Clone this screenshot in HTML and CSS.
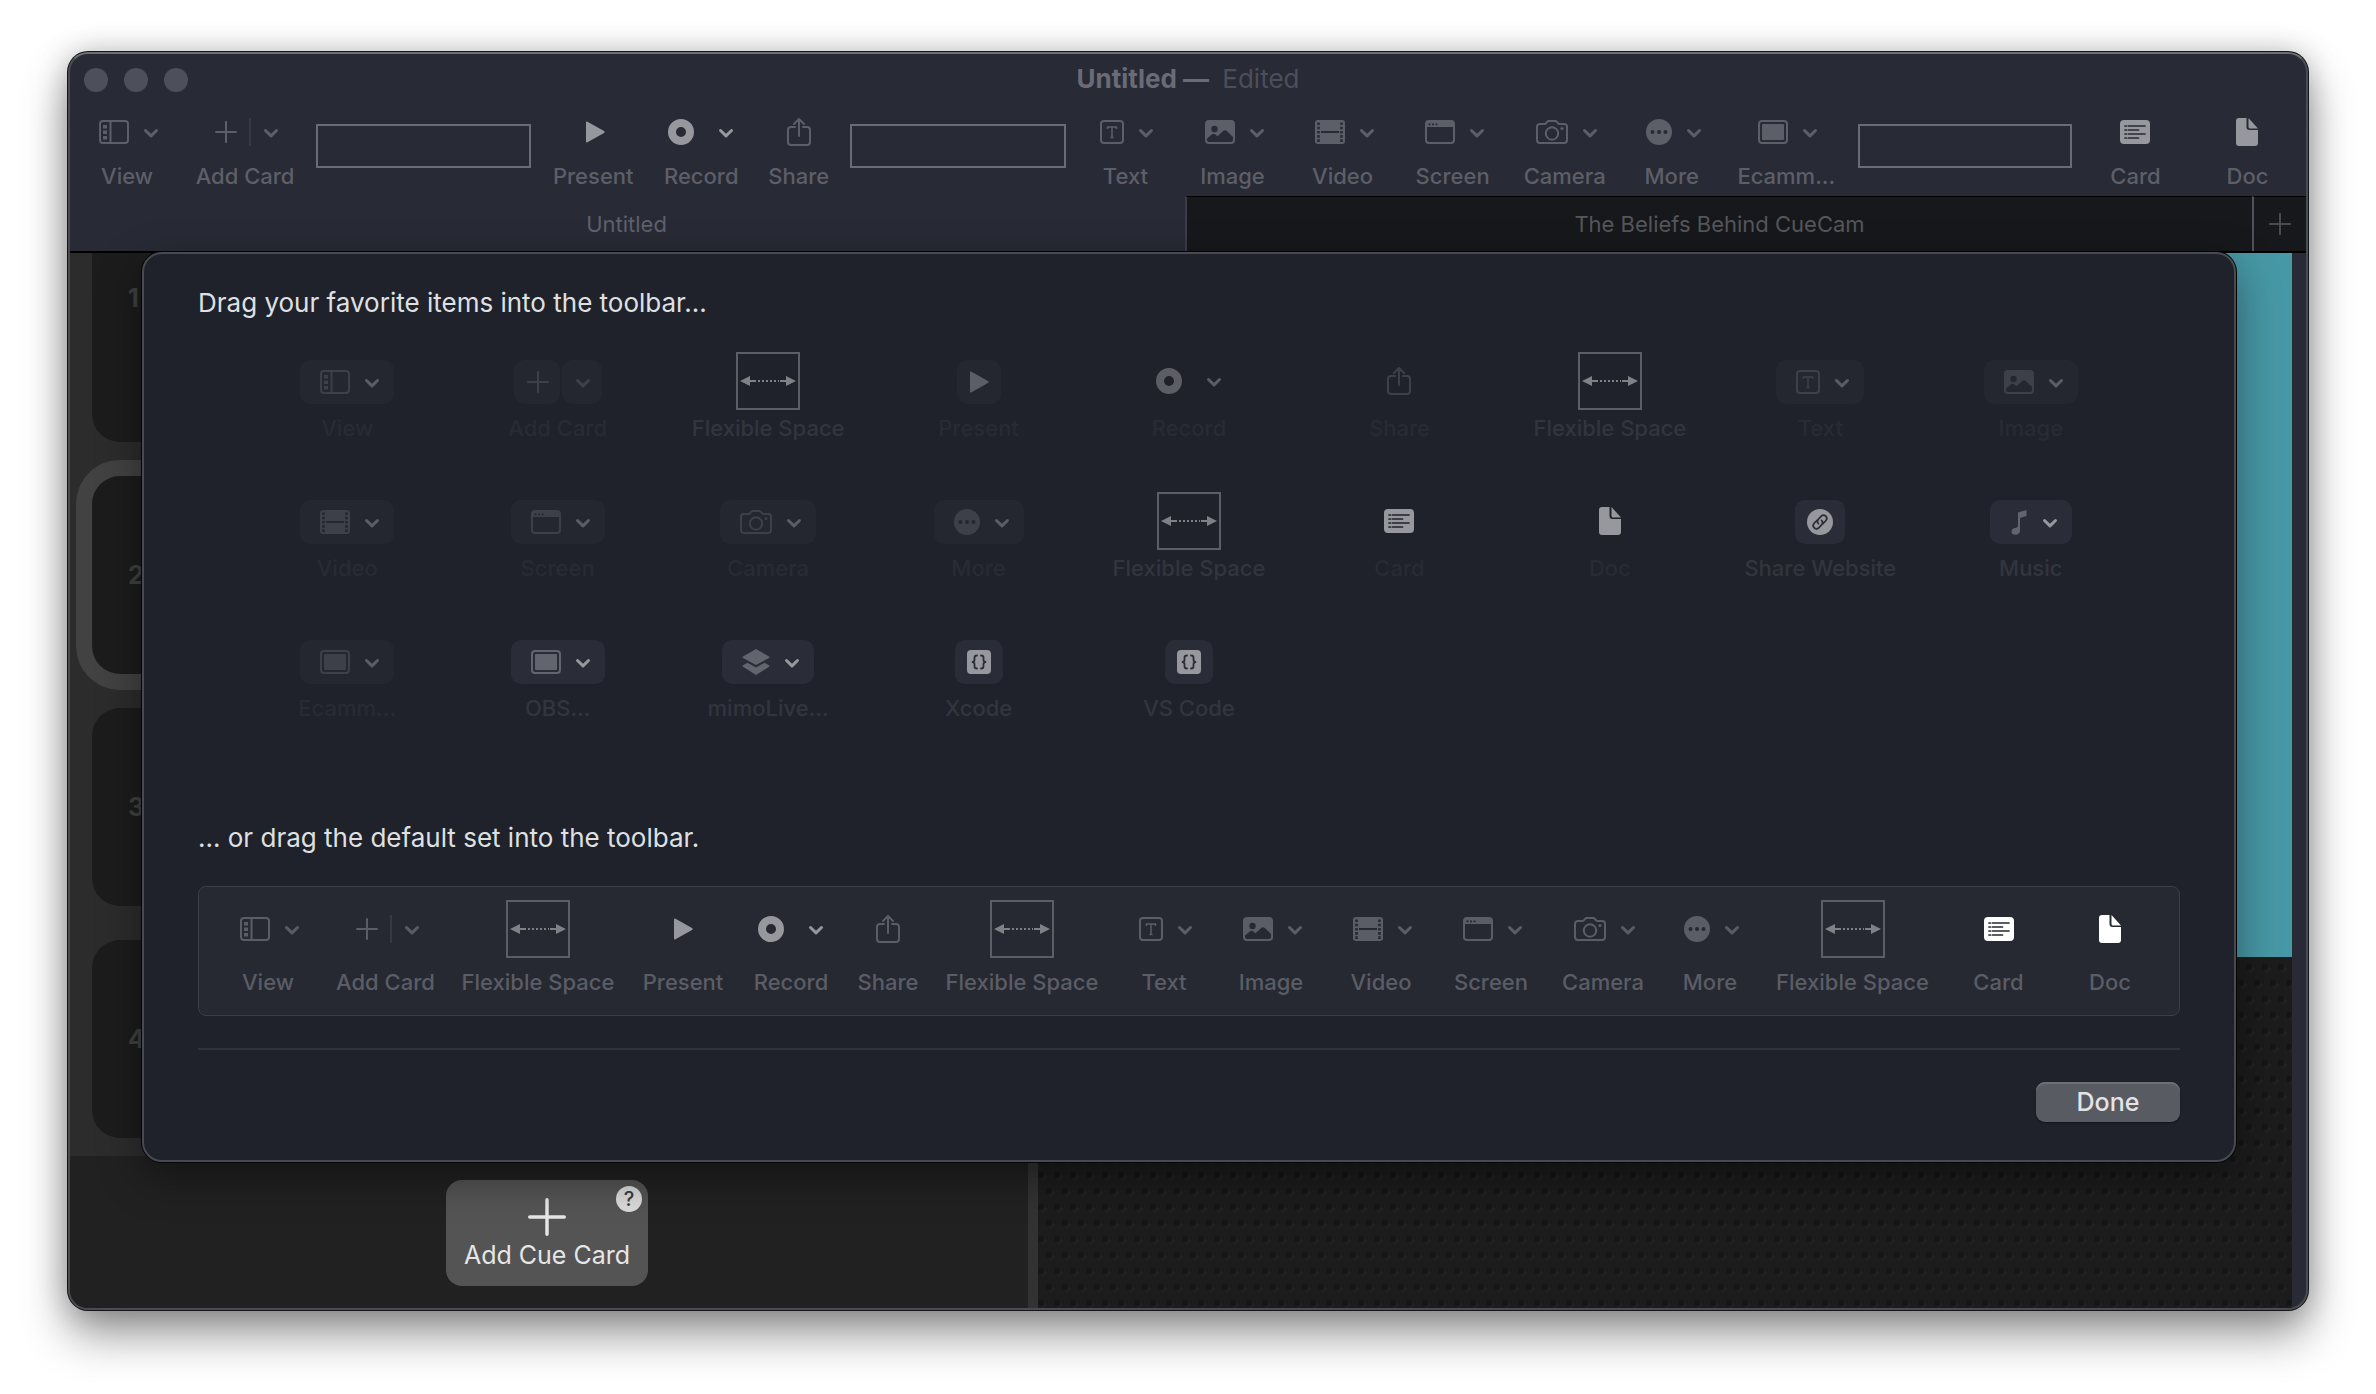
FILE: index.html
```html
<!DOCTYPE html>
<html lang="en">
<head>
<meta charset="utf-8">
<title>Untitled — Edited</title>
<link rel="stylesheet" href="styles.css">
</head>
<body>
<svg class="sprite" aria-hidden="true">
  <symbol id="view" viewBox="0 0 30 24"><rect x="1" y="1" width="28" height="22" rx="3" fill="none" stroke="currentColor" stroke-width="2"/><path d="M11.500 1v22" stroke="currentColor" stroke-width="2"/><path d="M4 5h4v3.500H4zM4 10.500h4V14H4zM4 16h4v3.500H4z" fill="currentColor"/></symbol>
  <symbol id="chev" viewBox="0 0 16 10"><path d="M2.500 2.500 8 7.800l5.500-5.300" fill="none" stroke="currentColor" stroke-width="3" stroke-linecap="round" stroke-linejoin="round"/></symbol>
  <symbol id="plus" viewBox="0 0 22 22"><path d="M11 1v20M1 11h20" stroke="currentColor" stroke-width="2" stroke-linecap="round"/></symbol>
  <symbol id="play" viewBox="0 0 20 22"><path d="M1 1.500Q1 0 2.500.700L19 10q1.300 1 0 2L2.500 21.300Q1 22 1 20.500z" fill="currentColor"/></symbol>
  <symbol id="record" viewBox="0 0 26 26"><circle cx="13" cy="13" r="9" fill="none" stroke="currentColor" stroke-width="8"/></symbol>
  <symbol id="share" viewBox="0 0 24 30"><path d="M8 10H4q-3 0-3 3v12q0 3 3 3h16q3 0 3-3V13q0-3-3-3h-4M12 19V2M7 7l5-5 5 5" fill="none" stroke="currentColor" stroke-width="2" stroke-linecap="round" stroke-linejoin="round"/></symbol>
  <symbol id="text" viewBox="0 0 24 24"><rect x="1" y="1" width="22" height="22" rx="3" fill="none" stroke="currentColor" stroke-width="2"/><path d="M7.500 9V7h9v2M12 7v10.500M10.500 17.500h3" fill="none" stroke="currentColor" stroke-width="1.500"/></symbol>
  <symbol id="image" viewBox="0 0 30 24"><rect width="30" height="24" rx="4" fill="currentColor"/><circle cx="9.500" cy="9" r="3.200" fill="var(--bg)"/><path d="M2 20v-1.500l5.500-4.500q1.200-.800 2.500.200l2.500 2 6-5.500q1.500-1 3 0L28 17v3q0 2-2 2H4q-2 0-2-2z" fill="var(--bg)"/></symbol>
  <symbol id="video" viewBox="0 0 30 24"><rect width="30" height="24" rx="3" fill="currentColor"/><path d="M6 12h18" stroke="var(--bg)" stroke-width="2"/><path d="M3.500 2.500v20M26.500 2.500v20" stroke="var(--bg)" stroke-width="2.600" stroke-dasharray="2.600 1.600"/></symbol>
  <symbol id="screen" viewBox="0 0 30 24"><rect x="1" y="1" width="28" height="22" rx="3" fill="none" stroke="currentColor" stroke-width="2"/><path d="M1 2h28v5H1z" fill="currentColor"/><path d="M3.500 3.500h2v1.800h-2zM7 3.500h2v1.800H7zM10.500 3.500h2v1.800h-2z" fill="var(--bg)"/></symbol>
  <symbol id="camera" viewBox="0 0 32 24"><path d="M4 4h4.500q1 0 1.600-.800l1-1.300q.600-.900 1.700-.900h6.400q1.100 0 1.700.900l1 1.300q.600.800 1.600.800H28q3 0 3 3v13q0 3-3 3H4q-3 0-3-3V7q0-3 3-3z" fill="none" stroke="currentColor" stroke-width="2"/><circle cx="16" cy="13.500" r="6.200" fill="none" stroke="currentColor" stroke-width="2"/><circle cx="26" cy="8.500" r="1.600" fill="currentColor"/></symbol>
  <symbol id="more" viewBox="0 0 26 26"><circle cx="13" cy="13" r="13" fill="currentColor"/><path d="M6.500 13h.01M13 13h.01M19.500 13h.01" stroke="var(--bg)" stroke-width="4" stroke-linecap="round"/></symbol>
  <symbol id="frame" viewBox="0 0 30 24"><rect x="1" y="1" width="28" height="22" rx="3" fill="none" stroke="currentColor" stroke-width="2"/><rect x="4" y="4" width="22" height="16" rx="1" fill="currentColor"/></symbol>
  <symbol id="card" viewBox="0 0 30 24"><rect width="30" height="24" rx="4" fill="currentColor"/><path d="M8.500 6H25M8.500 10h10M8.500 14H25M8.500 18h10M5 6h1.500M5 10h1.500M5 14h1.500M5 18h1.500" stroke="var(--bg)" stroke-width="1.700" stroke-linecap="round"/></symbol>
  <symbol id="doc" viewBox="0 0 22 28"><path d="M3 0h7.500v9q0 3 3 3H22v13q0 3-3 3H3q-3 0-3-3V3q0-3 3-3z" fill="currentColor"/><path d="M12.500 0 22 10.500h-8q-1.500 0-1.500-1.500z" fill="currentColor"/></symbol>
  <symbol id="link" viewBox="0 0 26 26"><circle cx="13" cy="13" r="13" fill="currentColor"/><g transform="rotate(-45 13 13)" fill="none" stroke="var(--bg)" stroke-width="1.700" stroke-linecap="round"><path d="M12 9.800H8a3.200 3.200 0 0 0 0 6.400h4a3.200 3.200 0 0 0 3.200-3.200"/><path d="M14 16.200h4a3.200 3.200 0 0 0 0-6.400h-4a3.200 3.200 0 0 0-3.200 3.200"/></g></symbol>
  <symbol id="music" viewBox="0 0 18 26"><path d="M8 3.500 16.500 1v6L10 9v12.500q0 3.500-4 4.200-4.500.300-4.500-3 0-3 3.500-3.700 3-.300 3-2z" fill="currentColor"/></symbol>
  <symbol id="layers" viewBox="0 0 28 28"><path d="M14 1 27 8.500q1 .700 0 1.400L14 17 1 9.900q-1-.700 0-1.400zM5.500 14.800 14 19.400l8.500-4.600L27 17.300q1 .700 0 1.400L14 27 1 18.700q-1-.700 0-1.400z" fill="currentColor"/></symbol>
  <symbol id="braces" viewBox="0 0 24 24"><rect width="24" height="24" rx="4" fill="currentColor"/><path d="M10 5.500q-2.500 0-2.500 2v2.300q0 2-2 2.200 2 .200 2 2.200v2.300q0 2 2.500 2M14 5.500q2.500 0 2.500 2v2.300q0 2 2 2.200-2 .200-2 2.200v2.300q0 2-2.500 2" fill="none" stroke="var(--bg)" stroke-width="1.800" stroke-linecap="round" stroke-linejoin="round"/></symbol>
  <symbol id="stretch" viewBox="0 0 56 12"><path d="M0 6 10 1v10zM56 6 46 1v10z" fill="currentColor"/><path d="M9 6h7M40 6h7" stroke="currentColor" stroke-width="2"/><path d="M18 6h21" stroke="currentColor" stroke-width="2" stroke-dasharray="2 2"/></symbol>
</svg>

<main class="window">
  <header class="chrome">
    <div class="titlebar">
      <div class="lights"><button aria-label="Close"></button><button aria-label="Minimize"></button><button aria-label="Zoom"></button></div>
      <h1 class="title"><b>Untitled —</b> <span>Edited</span></h1>
    </div>
    <div class="toolbar">
      <button class="item menu"><span class="icons"><svg class="w30"><use href="#view"/></svg><svg class="chev"><use href="#chev"/></svg></span><span class="label">View</span></button>
      <button class="item menu"><span class="icons split"><svg class="w22"><use href="#plus"/></svg><i></i><svg class="chev"><use href="#chev"/></svg></span><span class="label">Add Card</span></button>
      <div class="space"></div>
      <button class="item lit menu"><span class="icons"><svg class="w20"><use href="#play"/></svg></span><span class="label">Present</span></button>
      <button class="item lit"><span class="icons wide"><svg class="w26"><use href="#record"/></svg><svg class="chev"><use href="#chev"/></svg></span><span class="label">Record</span></button>
      <button class="item"><span class="icons"><svg class="w24 tall"><use href="#share"/></svg></span><span class="label">Share</span></button>
      <div class="space"></div>
      <button class="item menu"><span class="icons"><svg class="w24"><use href="#text"/></svg><svg class="chev"><use href="#chev"/></svg></span><span class="label">Text</span></button>
      <button class="item menu"><span class="icons"><svg class="w30"><use href="#image"/></svg><svg class="chev"><use href="#chev"/></svg></span><span class="label">Image</span></button>
      <button class="item menu"><span class="icons"><svg class="w30"><use href="#video"/></svg><svg class="chev"><use href="#chev"/></svg></span><span class="label">Video</span></button>
      <button class="item menu"><span class="icons"><svg class="w30"><use href="#screen"/></svg><svg class="chev"><use href="#chev"/></svg></span><span class="label">Screen</span></button>
      <button class="item menu"><span class="icons"><svg class="w32"><use href="#camera"/></svg><svg class="chev"><use href="#chev"/></svg></span><span class="label">Camera</span></button>
      <button class="item menu"><span class="icons"><svg class="w26"><use href="#more"/></svg><svg class="chev"><use href="#chev"/></svg></span><span class="label">More</span></button>
      <button class="item menu"><span class="icons"><svg class="w30"><use href="#frame"/></svg><svg class="chev"><use href="#chev"/></svg></span><span class="label">Ecamm...</span></button>
      <div class="space"></div>
      <button class="item lit"><span class="icons"><svg class="w30"><use href="#card"/></svg></span><span class="label">Card</span></button>
      <button class="item lit"><span class="icons"><svg class="w22 tall"><use href="#doc"/></svg></span><span class="label">Doc</span></button>
    </div>
    <nav class="tabs">
      <button class="tab current">Untitled</button>
      <button class="tab">The Beliefs Behind CueCam</button>
      <button class="tab add" aria-label="New tab"><svg class="w22"><use href="#plus"/></svg></button>
    </nav>
  </header>

  <div class="content">
    <section class="cues">
      <ol class="cards">
        <li class="first">1</li>
        <li class="selected">2</li>
        <li>3</li>
        <li>4</li>
      </ol>
      <div class="footer">
        <button class="add-cue"><svg><use href="#plus"/></svg><span>Add Cue Card</span><em>?</em></button>
      </div>
    </section>
    <div class="splitter"></div>
    <section class="stage"><div class="video"></div></section>

    <section class="sheet" role="dialog" aria-label="Customize toolbar">
      <h2>Drag your favorite items into the toolbar...</h2>
      <div class="palette">
        <button class="item used"><span class="icons pill"><svg class="w30"><use href="#view"/></svg><svg class="chev"><use href="#chev"/></svg></span><span class="label">View</span></button>
        <button class="item used"><span class="icons pair"><span class="pill"><svg class="w22"><use href="#plus"/></svg></span><span class="pill"><svg class="chev"><use href="#chev"/></svg></span></span><span class="label">Add Card</span></button>
        <button class="item"><span class="icons"><span class="flexbox"><svg><use href="#stretch"/></svg></span></span><span class="label">Flexible Space</span></button>
        <button class="item used bright"><span class="icons pill snug"><svg class="w20"><use href="#play"/></svg></span><span class="label">Present</span></button>
        <button class="item used bright"><span class="icons wide"><svg class="w26"><use href="#record"/></svg><svg class="chev"><use href="#chev"/></svg></span><span class="label">Record</span></button>
        <button class="item used"><span class="icons"><svg class="w24 tall"><use href="#share"/></svg></span><span class="label">Share</span></button>
        <button class="item"><span class="icons"><span class="flexbox"><svg><use href="#stretch"/></svg></span></span><span class="label">Flexible Space</span></button>
        <button class="item used"><span class="icons pill"><svg class="w24"><use href="#text"/></svg><svg class="chev"><use href="#chev"/></svg></span><span class="label">Text</span></button>
        <button class="item used"><span class="icons pill"><svg class="w30"><use href="#image"/></svg><svg class="chev"><use href="#chev"/></svg></span><span class="label">Image</span></button>

        <button class="item used"><span class="icons pill"><svg class="w30"><use href="#video"/></svg><svg class="chev"><use href="#chev"/></svg></span><span class="label">Video</span></button>
        <button class="item used"><span class="icons pill"><svg class="w30"><use href="#screen"/></svg><svg class="chev"><use href="#chev"/></svg></span><span class="label">Screen</span></button>
        <button class="item used"><span class="icons pill"><svg class="w32"><use href="#camera"/></svg><svg class="chev"><use href="#chev"/></svg></span><span class="label">Camera</span></button>
        <button class="item used"><span class="icons pill"><svg class="w26"><use href="#more"/></svg><svg class="chev"><use href="#chev"/></svg></span><span class="label">More</span></button>
        <button class="item"><span class="icons"><span class="flexbox"><svg><use href="#stretch"/></svg></span></span><span class="label">Flexible Space</span></button>
        <button class="item used solid"><span class="icons"><svg class="w30"><use href="#card"/></svg></span><span class="label">Card</span></button>
        <button class="item used solid"><span class="icons"><svg class="w22 tall"><use href="#doc"/></svg></span><span class="label">Doc</span></button>
        <button class="item solid"><span class="icons pill snug"><svg class="w26"><use href="#link"/></svg></span><span class="label">Share Website</span></button>
        <button class="item"><span class="icons pill"><svg class="w18"><use href="#music"/></svg><svg class="chev"><use href="#chev"/></svg></span><span class="label">Music</span></button>

        <button class="item used"><span class="icons pill"><svg class="w30"><use href="#frame"/></svg><svg class="chev"><use href="#chev"/></svg></span><span class="label">Ecamm...</span></button>
        <button class="item"><span class="icons pill"><svg class="w30"><use href="#frame"/></svg><svg class="chev"><use href="#chev"/></svg></span><span class="label">OBS...</span></button>
        <button class="item"><span class="icons pill"><svg class="w28"><use href="#layers"/></svg><svg class="chev"><use href="#chev"/></svg></span><span class="label">mimoLive...</span></button>
        <button class="item solid"><span class="icons pill snug"><svg class="w24"><use href="#braces"/></svg></span><span class="label">Xcode</span></button>
        <button class="item solid"><span class="icons pill snug"><svg class="w24"><use href="#braces"/></svg></span><span class="label">VS Code</span></button>
      </div>

      <h2 class="second">... or drag the default set into the toolbar.</h2>
      <div class="defaults">
        <div class="item menu"><span class="icons"><svg class="w30"><use href="#view"/></svg><svg class="chev"><use href="#chev"/></svg></span><span class="label">View</span></div>
        <div class="item menu"><span class="icons split"><svg class="w22"><use href="#plus"/></svg><i></i><svg class="chev"><use href="#chev"/></svg></span><span class="label">Add Card</span></div>
        <div class="item"><span class="icons"><span class="flexbox"><svg><use href="#stretch"/></svg></span></span><span class="label">Flexible Space</span></div>
        <div class="item lit"><span class="icons"><svg class="w20"><use href="#play"/></svg></span><span class="label">Present</span></div>
        <div class="item lit"><span class="icons wide"><svg class="w26"><use href="#record"/></svg><svg class="chev"><use href="#chev"/></svg></span><span class="label">Record</span></div>
        <div class="item"><span class="icons"><svg class="w24 tall"><use href="#share"/></svg></span><span class="label">Share</span></div>
        <div class="item"><span class="icons"><span class="flexbox"><svg><use href="#stretch"/></svg></span></span><span class="label">Flexible Space</span></div>
        <div class="item menu"><span class="icons"><svg class="w24"><use href="#text"/></svg><svg class="chev"><use href="#chev"/></svg></span><span class="label">Text</span></div>
        <div class="item menu"><span class="icons"><svg class="w30"><use href="#image"/></svg><svg class="chev"><use href="#chev"/></svg></span><span class="label">Image</span></div>
        <div class="item menu"><span class="icons"><svg class="w30"><use href="#video"/></svg><svg class="chev"><use href="#chev"/></svg></span><span class="label">Video</span></div>
        <div class="item menu"><span class="icons"><svg class="w30"><use href="#screen"/></svg><svg class="chev"><use href="#chev"/></svg></span><span class="label">Screen</span></div>
        <div class="item menu"><span class="icons"><svg class="w32"><use href="#camera"/></svg><svg class="chev"><use href="#chev"/></svg></span><span class="label">Camera</span></div>
        <div class="item menu"><span class="icons"><svg class="w26"><use href="#more"/></svg><svg class="chev"><use href="#chev"/></svg></span><span class="label">More</span></div>
        <div class="item"><span class="icons"><span class="flexbox"><svg><use href="#stretch"/></svg></span></span><span class="label">Flexible Space</span></div>
        <div class="item white"><span class="icons"><svg class="w30"><use href="#card"/></svg></span><span class="label">Card</span></div>
        <div class="item white"><span class="icons"><svg class="w22 tall"><use href="#doc"/></svg></span><span class="label">Doc</span></div>
      </div>
      <div class="actions"><button class="done">Done</button></div>
    </section>
  </div>
</main>
</body>
</html>
```
FILE: styles.css
```css
* { box-sizing: border-box; }

body {
  margin: 0;
  min-height: 100vh;
  padding: 52px 68px 84px;
  display: flex;
  background: #fff;
  font-family: Inter, "Liberation Sans", sans-serif;
  font-size: 25px;
}

button {
  margin: 0;
  padding: 0;
  border: 0;
  background: none;
  font: inherit;
  color: inherit;
}

.sprite { display: none; }

.window {
  flex: 1;
  min-width: 0;
  display: flex;
  flex-direction: column;
  border: 2px solid #4b4c50;
  border-top-color: #6d6e73;
  border-radius: 20px;
  overflow: hidden;
  background: #282a35;
  box-shadow: 0 0 0 1px #141519, 0 24px 46px rgba(0, 0, 0, .42), 0 0 30px rgba(0, 0, 0, .22);
}

/* title bar */
.titlebar {
  display: grid;
  grid-template-columns: 1fr auto 1fr;
  align-items: center;
  height: 52px;
  padding: 0 14px;
}
.lights { display: flex; gap: 16px; }
.lights button { width: 24px; height: 24px; border-radius: 50%; background: #4d4f5b; }
.title { margin: 0; font-size: 26px; line-height: 32px; padding-bottom: 2px; font-weight: 400; color: #4d4e5a; }
.title b { font-weight: 700; color: #6a6b76; margin-right: 6px; }

/* toolbar items */
.item {
  --bg: #282a35;
  display: flex;
  flex-direction: column;
  align-items: center;
  gap: 5px;
  min-width: 0;
  color: #5d5f68;
}
.icons { display: flex; align-items: center; justify-content: center; gap: 14px; height: 52px; }
.icons svg { display: block; height: 24px; flex: none; }
.icons svg.chev { width: 16px; height: 10px; margin-top: 2px; }
.icons svg.w18 { width: 18px; height: 26px; }
.icons svg.w20 { width: 20px; height: 22px; }
.icons svg.w22 { width: 22px; height: 22px; }
.icons svg.w24 { width: 24px; }
.icons svg.w26 { width: 26px; height: 26px; }
.icons svg.w28 { width: 28px; height: 28px; }
.icons svg.w30 { width: 30px; }
.icons svg.w32 { width: 32px; }
.icons svg.w22.tall { height: 28px; }
.icons svg.w24.tall { height: 30px; }
.menu .icons { padding-left: 4px; }
.wide { gap: 24px; }
.split i { width: 2px; height: 28px; background: #363843; }
.split { gap: 12px; }
.label { font-size: 22px; line-height: 26px; white-space: nowrap; font-weight: 500; }
.lit .icons { color: #97989d; }

.toolbar {
  display: grid;
  grid-template-columns: 114fr 122fr 235fr 104fr 112fr 83fr 236fr 98fr 116fr 104fr 116fr 108fr 106fr 123fr 234fr 107fr 117fr;
  height: 90px;
}
.space { height: 44px; margin: 18px 10px 0; border: 2px solid #696b76; }

/* tabs */
.tabs {
  display: grid;
  grid-template-columns: 1115fr 1067fr 54px;
  height: 57px;
  border-bottom: 2px solid #000;
  font-size: 22px;
}
.tab {
  border-top: 1px solid #000;
  border-left: 2px solid #3b3c46;
  background: #17181c;
  color: #55565a;
}
.tab.current { padding-right: 4px; border-color: transparent; background: transparent; color: #5f616c; }
.tab.add { display: grid; place-items: center; border-left-color: #50525b; color: #4a4b4f; }
.tab svg { width: 22px; height: 22px; }

/* document */
.content {
  position: relative;
  flex: 1;
  min-height: 0;
  display: grid;
  grid-template-columns: 958fr 10px 1254fr 14px;
}
.cues { display: flex; flex-direction: column; min-height: 0; }
.cards {
  flex: 1 1 0;
  min-height: 0;
  margin: 0;
  padding: 0 22px 18px;
  display: flex;
  flex-direction: column;
  justify-content: flex-end;
  gap: 34px;
  overflow: hidden;
  list-style: none;
  background: #2c2c2c;
  font-weight: 700;
  color: #404040;
}
.cards li {
  flex: none;
  display: flex;
  align-items: center;
  height: 198px;
  padding-left: 36px;
  border-radius: 28px;
  background: #1c1c1c;
}
.cards .first { height: 288px; }
.cards .selected { box-shadow: 0 0 0 16px #424242; }
.footer { height: 152px; padding: 24px 4px 0 0; background: #212121; text-align: center; }
.add-cue {
  position: relative;
  width: 202px;
  height: 106px;
  border-radius: 16px;
  background: #545454;
  color: #e6e6e6;
  display: inline-flex;
  flex-direction: column;
  align-items: center;
  gap: 4px;
  padding-top: 18px;
}
.add-cue svg { width: 38px; height: 38px; }
.add-cue em {
  position: absolute;
  top: 6px;
  right: 6px;
  width: 26px;
  height: 26px;
  border-radius: 50%;
  background: #dadada;
  color: #3c3c3c;
  font: 500 20px/26px Inter, sans-serif;
}
.splitter { background: #323232; }
.stage {
  background-color: #1c1c1c;
  background-image:
    radial-gradient(circle at 11px 10px, #141414 2px, transparent 4px),
    radial-gradient(circle at 3px 26px, #141414 2px, transparent 4px),
    radial-gradient(circle at 13px 12px, #232323 2px, transparent 4px),
    radial-gradient(circle at 5px 28px, #232323 2px, transparent 4px);
  background-size: 16px 32px;
}
.stage .video { height: 704px; background: #4798a6; }

/* customization sheet */
.sheet {
  position: absolute;
  top: -1px;
  left: 72px;
  right: 70px;
  padding: 33px 54px 38px;
  border: 2px solid #484a52;
  border-radius: 20px;
  background: #1f222b;
  box-shadow: 0 0 0 1px #050506, 0 14px 44px rgba(0, 0, 0, .42);
  color: #dfe0e1;
}
.sheet h2 { margin: 0; font-size: 26px; line-height: 32px; font-weight: 400; }
.sheet .second { margin-top: 101px; }
.sheet .icons { height: 58px; }
.palette {
  display: grid;
  grid-template-columns: repeat(9, 1fr);
  row-gap: 51px;
  margin-top: 33px;
  padding: 0 44px;
}
.palette .item { --bg: #2a2d37; height: 89px; color: #62646e; }
.palette .label { color: #33353e; }
.palette .used { --bg: #242730; color: #3e4049; }
.palette .used .label { color: #282b34; }
.palette .used .chev { color: #5b5d66; }
.palette .item:not(.used) .chev { color: #97989d; }
.palette .bright { color: #5d5e65; }
.palette .solid { color: #97989d; }
.palette .used.solid { --bg: #1f222b; }
.sheet .pill {
  display: flex;
  align-items: center;
  height: 44px;
  margin: 8px 0 6px;
  padding: 0 14px 0 20px;
  border-radius: 10px;
  background: #2a2d37;
}
.palette .used .pill { background: #242730; }
.sheet .snug { padding: 0 12px; }
.sheet .pair { gap: 2px; }
.sheet .pair .pill { padding: 0 11px 0 13px; }
.pair .pill .chev { color: #3e4049; }
.flexbox {
  display: grid;
  place-items: center;
  width: 64px;
  height: 58px;
  border: 2px solid #5b5e67;
  color: #808186;
}
.icons .flexbox svg { width: 56px; height: 12px; }

.defaults {
  display: grid;
  grid-template-columns: 110fr 125fr 180fr 110fr 106fr 88fr 180fr 104fr 110fr 110fr 110fr 114fr 100fr 185fr 107fr 116fr;
  margin-top: 32px;
  padding: 13px 11px 20px 14px;
  border: 1px solid #3b3e47;
  border-radius: 8px;
  background: #262932;
}
.defaults .item { --bg: #262932; gap: 11px; color: #5b5d66; }
.defaults .white .icons { color: #fff; }
.actions {
  display: flex;
  justify-content: flex-end;
  margin-top: 32px;
  padding-top: 32px;
  border-top: 2px solid #30333c;
}
.done {
  width: 144px;
  height: 40px;
  border-radius: 9px;
  background: #595b63;
  box-shadow: inset 0 2px 0 #6e7077, 0 1px 2px rgba(0, 0, 0, .4);
  font-weight: 500;
  color: #e4e4e6;
}
```
